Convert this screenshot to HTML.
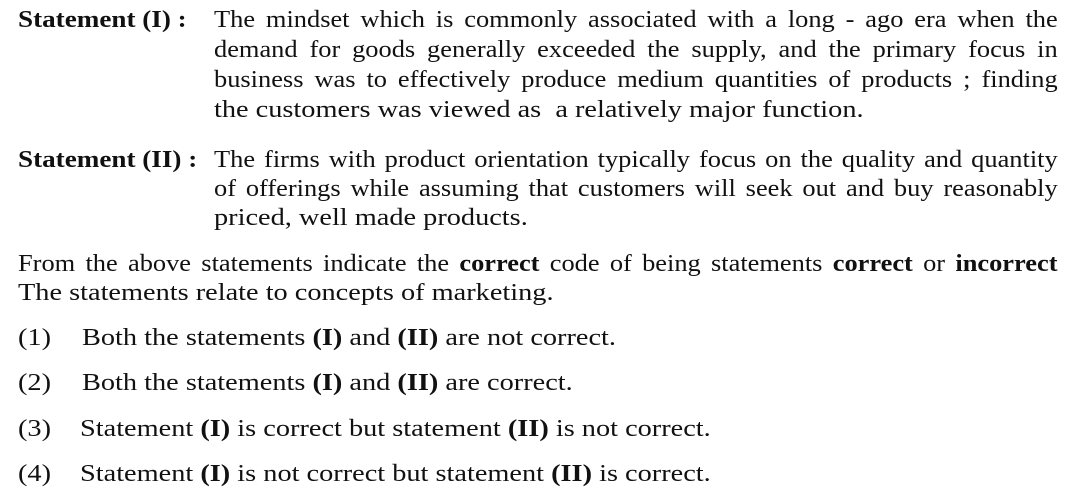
<!DOCTYPE html>
<html><head><meta charset="utf-8"><style>
body{margin:0;width:1075px;height:498px;background:#fff;position:relative;overflow:hidden;font-family:"Liberation Serif",serif;font-size:24px;color:#111}
.l{position:absolute;line-height:30px;white-space:nowrap;transform:scaleX(1.18);transform-origin:0 0}
.j{text-align:justify;text-align-last:justify;white-space:normal;transform:scaleX(1.1)}
.s{transform:scaleX(1.13)}
b{font-weight:bold}
</style></head><body>
<div class="l s" style="left:18px;top:5px"><b>Statement (I) :</b></div>
<div class="l j" style="left:214px;width:767px;top:5px">The mindset which is commonly associated with a long - ago era when the</div>
<div class="l j" style="left:214px;width:767px;top:35px">demand for goods generally exceeded the supply, and the primary focus in</div>
<div class="l j" style="left:214px;width:767px;top:65px">business was to effectively produce medium quantities of products ; finding</div>
<div class="l" style="left:214px;top:95px">the customers was viewed as &nbsp;a relatively major function.</div>

<div class="l s" style="left:18px;top:145px"><b>Statement (II) :</b></div>
<div class="l j" style="left:214px;width:767px;top:145px">The firms with product orientation typically focus on the quality and quantity</div>
<div class="l j" style="left:214px;width:767px;top:174px">of offerings while assuming that customers will seek out and buy reasonably</div>
<div class="l" style="left:214px;top:203px">priced, well made products.</div>

<div class="l j" style="left:18px;width:945px;top:249px">From the above statements indicate the <b>correct</b> code of being statements <b>correct</b> or <b>incorrect</b></div>
<div class="l" style="left:18px;top:278px">The statements relate to concepts of marketing.</div>

<div class="l" style="left:18px;top:323px">(1)</div><div class="l" style="left:82px;top:323px">Both the statements <b>(I)</b> and <b>(II)</b> are not correct.</div>
<div class="l" style="left:18px;top:368px">(2)</div><div class="l" style="left:82px;top:368px">Both the statements <b>(I)</b> and <b>(II)</b> are correct.</div>
<div class="l" style="left:18px;top:414px">(3)</div><div class="l" style="left:80px;top:414px">Statement <b>(I)</b> is correct but statement <b>(II)</b> is not correct.</div>
<div class="l" style="left:18px;top:459px">(4)</div><div class="l" style="left:80px;top:459px">Statement <b>(I)</b> is not correct but statement <b>(II)</b> is correct.</div>
</body></html>
